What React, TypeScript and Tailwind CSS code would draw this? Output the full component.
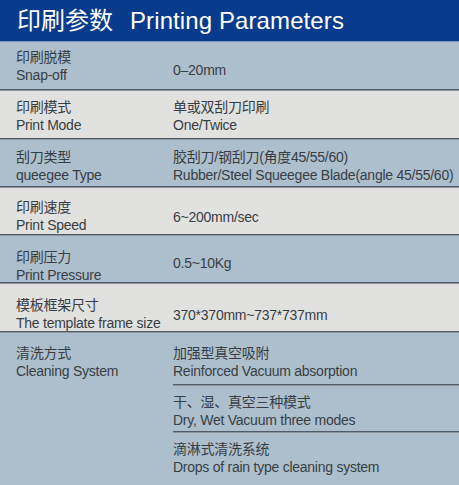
import React from "react";

type Row = {
  zh: string;
  en: string;
  v1: string;
  v2?: string;
  bg: string;
  h: string;
  pt: string;
  vpt: string;
};

const rows: Row[] = [
  { zh: "印刷脱模", en: "Snap-off", v1: "0–20mm", bg: "bg-[#adbecc]", h: "h-[47px]", pt: "pt-[6px]", vpt: "pt-[19px]" },
  { zh: "印刷模式", en: "Print Mode", v1: "单或双刮刀印刷", v2: "One/Twice", bg: "bg-[#e1e1df]", h: "h-[47px]", pt: "pt-[7px]", vpt: "pt-[7px]" },
  { zh: "刮刀类型", en: "queegee Type", v1: "胶刮刀/钢刮刀(角度45/55/60)", v2: "Rubber/Steel Squeegee Blade(angle 45/55/60)", bg: "bg-[#adbecc]", h: "h-[46px]", pt: "pt-[8px]", vpt: "pt-[8px]" },
  { zh: "印刷速度", en: "Print Speed", v1: "6~200mm/sec", bg: "bg-[#e1e1df]", h: "h-[46px]", pt: "pt-[10px]", vpt: "pt-[20px]" },
  { zh: "印刷压力", en: "Print Pressure", v1: "0.5~10Kg", bg: "bg-[#adbecc]", h: "h-[46px]", pt: "pt-[12px]", vpt: "pt-[18px]" },
  { zh: "模板框架尺寸", en: "The template frame size", v1: "370*370mm~737*737mm", bg: "bg-[#e1e1df]", h: "h-[47px]", pt: "pt-[12px]", vpt: "pt-[22px]" },
];

const Sep = () => (
  <div className="h-[2px] w-full bg-[#525c66] border-b border-[#8d959c]" />
);

export default function App() {
  return (
    <div
      className="w-[459px] h-[485px] overflow-hidden flex flex-col bg-[#adbecc] text-[#383e45]"
      style={{ fontFamily: '"Liberation Sans", Arial, "Noto Sans CJK SC", sans-serif' }}
    >
      <div className="h-[42px] shrink-0 bg-[#083b8b] border-b border-[#7c9cc0] flex items-center pl-[17px] text-white text-[24px] leading-none">
        <span>印刷参数</span>
        <span className="ml-[17px] tracking-[0.1px]">Printing Parameters</span>
      </div>
      {rows.map((r) => (
        <React.Fragment key={r.zh}>
          <div className={`flex shrink-0 ${r.bg} ${r.h} text-[14px] leading-[18px] tracking-[-0.25px]`}>
            <div className={`w-[173px] shrink-0 pl-[16px] ${r.pt} flex flex-col`}>
              <span>{r.zh}</span>
              <span className="whitespace-nowrap">{r.en}</span>
            </div>
            <div className={`flex-1 flex flex-col ${r.v2 ? r.pt : r.vpt}`}>
              <span className="whitespace-nowrap">{r.v1}</span>
              {r.v2 && <span className="whitespace-nowrap">{r.v2}</span>}
            </div>
          </div>
          <Sep />
        </React.Fragment>
      ))}
      <div className="flex flex-1 bg-[#adbecc] text-[14px] leading-[18px] tracking-[-0.25px]">
        <div className="w-[173px] shrink-0 pl-[16px] pt-[11px] flex flex-col">
          <span>清洗方式</span>
          <span className="whitespace-nowrap">Cleaning System</span>
        </div>
        <div className="flex-1 flex flex-col">
          <div className="h-[51px] pt-[11px] flex flex-col">
            <span>加强型真空吸附</span>
            <span className="whitespace-nowrap">Reinforced Vacuum absorption</span>
          </div>
          <Sep />
          <div className="h-[45px] pt-[7px] flex flex-col">
            <span>干、湿、真空三种模式</span>
            <span className="whitespace-nowrap">Dry, Wet Vacuum three modes</span>
          </div>
          <Sep />
          <div className="pt-[7px] flex flex-col">
            <span>滴淋式清洗系统</span>
            <span className="whitespace-nowrap">Drops of rain type cleaning system</span>
          </div>
        </div>
      </div>
    </div>
  );
}
